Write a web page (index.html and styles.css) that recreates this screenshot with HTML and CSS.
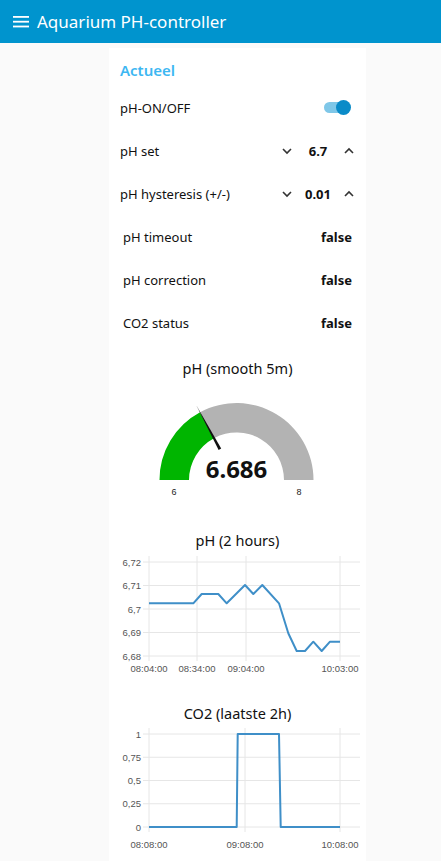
FILE: index.html
```html
<!DOCTYPE html>
<html lang="nl">
<head>
  <meta charset="UTF-8">
  <title>Aquarium PH-controller</title>
  <link rel="stylesheet" href="styles.css">
</head>
<body>
  <header class="toolbar">
    <svg class="menu-icon" width="16" height="12" viewBox="0 0 16 12">
      <rect x="0" y="0" width="16" height="1.8" fill="#fff"/>
      <rect x="0" y="4.8" width="16" height="1.8" fill="#fff"/>
      <rect x="0" y="9.6" width="16" height="1.8" fill="#fff"/>
    </svg>
    <span class="toolbar-title">Aquarium PH-controller</span>
  </header>

  <main class="content">
    <div class="card">
      <div class="group-title">Actueel</div>

      <div class="row row-switch">
        <span class="label">pH-ON/OFF</span>
        <span class="switch"><span class="switch-knob"></span></span>
      </div>

      <div class="row row-numeric">
        <span class="label">pH set</span>
        <div class="numeric">
          <svg class="chev" width="24" height="12" viewBox="0 0 24 12"><path d="M8 4 L12 8 L16 4" fill="none" stroke="#333" stroke-width="1.6"/></svg>
          <span class="num-value">6.7</span>
          <svg class="chev" width="24" height="12" viewBox="0 0 24 12"><path d="M8 8 L12 4 L16 8" fill="none" stroke="#333" stroke-width="1.6"/></svg>
        </div>
      </div>

      <div class="row row-numeric">
        <span class="label">pH hysteresis (+/-)</span>
        <div class="numeric">
          <svg class="chev" width="24" height="12" viewBox="0 0 24 12"><path d="M8 4 L12 8 L16 4" fill="none" stroke="#333" stroke-width="1.6"/></svg>
          <span class="num-value">0.01</span>
          <svg class="chev" width="24" height="12" viewBox="0 0 24 12"><path d="M8 8 L12 4 L16 8" fill="none" stroke="#333" stroke-width="1.6"/></svg>
        </div>
      </div>

      <div class="row row-text">
        <span class="label">pH timeout</span>
        <span class="value">false</span>
      </div>

      <div class="row row-text">
        <span class="label">pH correction</span>
        <span class="value">false</span>
      </div>

      <div class="row row-text">
        <span class="label">CO2 status</span>
        <span class="value">false</span>
      </div>

      <!-- gauge -->
      <div class="widget gauge">
        <div class="widget-title">pH (smooth 5m)</div>
        <svg width="257" height="135" viewBox="0 0 257 135">
          <path d="M50.5 101 A77 77 0 0 1 91.05 33.18 L105 59.16 A47.5 47.5 0 0 0 80 101 Z" fill="#00b500"/>
          <path d="M91.05 33.18 A77 77 0 0 1 204.5 101 L175 101 A47.5 47.5 0 0 0 105 59.16 Z" fill="#b3b3b3"/>
          <polygon points="87.3,26.2 109.6,70.9 112.2,69.5" fill="#111"/>
          <text x="127.5" y="99" class="gauge-value" text-anchor="middle">6.686</text>
          <text x="65" y="116" class="gauge-limit" text-anchor="middle">6</text>
          <text x="190" y="116" class="gauge-limit" text-anchor="middle">8</text>
        </svg>
      </div>

      <!-- pH chart -->
      <div class="widget chart chart-ph">
        <div class="widget-title">pH (2 hours)</div>
        <svg width="257" height="132" viewBox="0 0 257 132">
          <g class="grid">
            <line x1="34" y1="11" x2="251" y2="11"/>
            <line x1="34" y1="34.5" x2="251" y2="34.5"/>
            <line x1="34" y1="58" x2="251" y2="58"/>
            <line x1="34" y1="81.5" x2="251" y2="81.5"/>
            <line x1="34" y1="105" x2="251" y2="105"/>
            <line x1="40" y1="5" x2="40" y2="110"/>
            <line x1="88" y1="5" x2="88" y2="110"/>
            <line x1="137" y1="5" x2="137" y2="110"/>
            <line x1="231" y1="5" x2="231" y2="110"/>
          </g>
          <g class="axis-label" text-anchor="end">
            <text x="32" y="14.5">6,72</text>
            <text x="32" y="38">6,71</text>
            <text x="32" y="61.5">6,7</text>
            <text x="32" y="85">6,69</text>
            <text x="32" y="108.5">6,68</text>
          </g>
          <g class="axis-label" text-anchor="middle">
            <text x="40" y="121">08:04:00</text>
            <text x="88" y="121">08:34:00</text>
            <text x="137" y="121">09:04:00</text>
            <text x="231" y="121">10:03:00</text>
          </g>
          <polyline class="series" points="40,52.3 84.3,52.3 92.7,43 109.3,43 117.7,52.3 136,34 144.3,43 153.3,34 170,52.3 179.3,82.3 187.7,100 196,100 204.3,90.7 212.7,100 221,90.7 231,90.7"/>
        </svg>
      </div>

      <!-- CO2 chart -->
      <div class="widget chart chart-co2">
        <div class="widget-title">CO2 (laatste 2h)</div>
        <svg width="257" height="135" viewBox="0 0 257 135">
          <g class="grid">
            <line x1="34" y1="10" x2="251" y2="10"/>
            <line x1="34" y1="33.25" x2="251" y2="33.25"/>
            <line x1="34" y1="56.5" x2="251" y2="56.5"/>
            <line x1="34" y1="79.75" x2="251" y2="79.75"/>
            <line x1="34" y1="103" x2="251" y2="103"/>
            <line x1="40" y1="4" x2="40" y2="108"/>
            <line x1="136" y1="4" x2="136" y2="108"/>
            <line x1="231" y1="4" x2="231" y2="108"/>
          </g>
          <g class="axis-label" text-anchor="end">
            <text x="32" y="13.5">1</text>
            <text x="32" y="36.75">0,75</text>
            <text x="32" y="60">0,5</text>
            <text x="32" y="83.25">0,25</text>
            <text x="32" y="106.5">0</text>
          </g>
          <g class="axis-label" text-anchor="middle">
            <text x="40" y="124">08:08:00</text>
            <text x="136" y="124">09:08:00</text>
            <text x="231" y="124">10:08:00</text>
          </g>
          <polyline class="series" points="40,103 127.7,103 128.7,10 170,10 171.7,103 231,103"/>
        </svg>
      </div>
    </div>
  </main>
</body>
</html>
```

FILE: styles.css
```css
body {
  margin: 0;
  padding: 0;
  background-color: #fafafa;
  font-family: "Noto Sans", "Open Sans", sans-serif;
  color: #111;
  height: 861px;
  overflow: hidden;
}

.toolbar {
  height: 43px;
  background-color: #0094ce;
  display: flex;
  align-items: center;
  padding-left: 13px;
  box-sizing: border-box;
}

.menu-icon {
  margin-top: 1px;
}

.toolbar-title {
  color: #fff;
  font-size: 17px;
  margin-left: 8px;
}

.content {
  display: flex;
  padding-top: 5px;
  padding-left: 109px;
}

.card {
  width: 257px;
  min-height: 820px;
  background-color: #fff;
}

.group-title {
  padding: 10px 0 0 11px;
  height: 28px;
  line-height: 24px;
  font-size: 15px;
  font-weight: 600;
  color: #3db7f2;
}

.row {
  height: 43px;
  display: flex;
  align-items: center;
  justify-content: space-between;
  font-size: 13px;
}

.row-switch {
  padding: 0 16px 0 11px;
}

.row-numeric {
  padding: 0 5px 0 11px;
}

.row-text {
  padding: 0 14px 0 14px;
}

.switch {
  position: relative;
  width: 26px;
  height: 11px;
  border-radius: 6px;
  background-color: #7fc7e8;
}

.switch-knob {
  position: absolute;
  right: -1px;
  top: -2px;
  width: 15px;
  height: 15px;
  border-radius: 50%;
  background-color: #0a8bc8;
}

.numeric {
  display: flex;
  align-items: center;
}

.num-value {
  width: 38px;
  text-align: center;
  font-weight: bold;
}

.value {
  font-weight: bold;
}

.widget-title {
  text-align: center;
  line-height: 22px;
  font-size: 14.5px;
}

.gauge {
  padding-top: 13px;
}

.chart-ph {
  padding-top: 15px;
}

.chart-co2 {
  padding-top: 19px;
}

.widget svg {
  display: block;
}

.gauge-value {
  font-family: "Noto Sans", sans-serif;
  font-weight: bold;
  font-size: 24px;
  fill: #111;
}

.gauge-limit {
  font-family: "Liberation Sans", sans-serif;
  font-size: 9px;
  fill: #222;
}

.grid line {
  stroke: #e6e6e6;
  stroke-width: 1;
}

.axis-label {
  font-family: "Liberation Sans", sans-serif;
  font-size: 9.5px;
  fill: #555;
}

.series {
  fill: none;
  stroke: #3f8fc8;
  stroke-width: 2;
  stroke-linejoin: round;
}
```
